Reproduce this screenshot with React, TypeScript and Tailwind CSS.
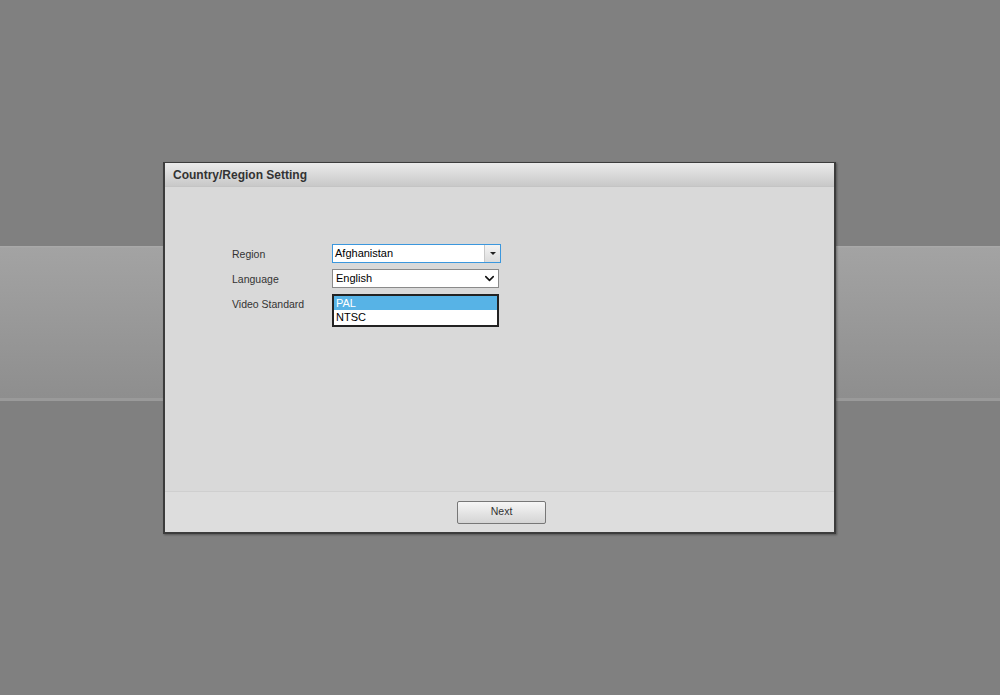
import { ChevronDown } from "lucide-react";

const font = { fontFamily: '"Liberation Sans", Arial, sans-serif' };

const Field = ({ label, children }: { label: string; children: React.ReactNode }) => (
  <div className="flex items-start">
    <div className="w-[100px] pt-[2px] text-[10.5px] leading-[16px] text-[#333]">{label}</div>
    {children}
  </div>
);

const App = () => {
  const videoStandards = ["PAL", "NTSC"];
  return (
    <div
      style={font}
      className="flex h-[695px] w-full justify-center bg-[#808080] bg-[linear-gradient(to_bottom,#808080_0,#808080_246px,#ababab_246px,#a3a3a3_248px,#8e8e8e_398px,#9a9a9a_398px,#9a9a9a_401px,#808080_401px)] pt-[162px]"
    >
      <div className="mr-[1px] flex h-[372px] w-[673px] flex-col border border-[#3c3c3c] border-b-2 border-l-2 border-r-2 bg-[#d9d9d9] shadow-[1px_1px_2px_rgba(0,0,0,0.35)]">
        {/* header */}
        <div className="flex h-[24px] items-center border-b border-[#c4c4c4] bg-[linear-gradient(to_bottom,#ebebeb,#c8c8c8)] pl-[8px] text-[12px] font-bold text-[#333]">
          Country/Region Setting
        </div>

        {/* form */}
        <div className="flex flex-1 flex-col gap-[6px] pl-[67px] pt-[57px]">
          <Field label="Region">
            <div className="flex h-[19px] w-[169px] items-center border border-[#3b97dd] bg-white">
              <span className="flex-1 pl-[2px] text-[11px] text-black">Afghanistan</span>
              <span className="flex h-full w-[16px] items-center justify-center border-l border-[#c8c8c8] bg-[linear-gradient(to_bottom,#f4f4f4,#dcdcdc)]">
                <span className="h-0 w-0 border-x-[3px] border-t-[3px] border-x-transparent border-t-[#222]" />
              </span>
            </div>
          </Field>
          <Field label="Language">
            <div className="flex h-[19px] w-[167px] items-center border border-[#8a8a8a] bg-white">
              <span className="flex-1 pl-[3px] text-[11px] text-black">English</span>
              <ChevronDown className="mr-[1px] h-[15px] w-[15px] text-[#111]" strokeWidth={2.5} />
            </div>
          </Field>
          <Field label="Video Standard">
            <div className="flex w-[167px] flex-col border-2 border-[#222] bg-white pb-[1px]">
              {videoStandards.map((v, i) => (
                <div
                  key={v}
                  className={
                    i === 0
                      ? "h-[14px] bg-[#57b3e6] pl-[2px] text-[11px] leading-[14px] text-white"
                      : "h-[14px] pl-[2px] text-[11px] leading-[14px] text-black"
                  }
                >
                  {v}
                </div>
              ))}
            </div>
          </Field>
        </div>

        {/* footer */}
        <div className="flex h-[41px] items-center justify-center border-t border-[#cfcfcf] bg-[#dddddd] pl-[4px]">
          <button className="h-[23px] w-[89px] rounded-[2px] border border-[#777] bg-[linear-gradient(to_bottom,#f6f6f6,#d4d4d4)] text-[10.5px] text-[#333]">
            Next
          </button>
        </div>
      </div>
    </div>
  );
};

export default App;
